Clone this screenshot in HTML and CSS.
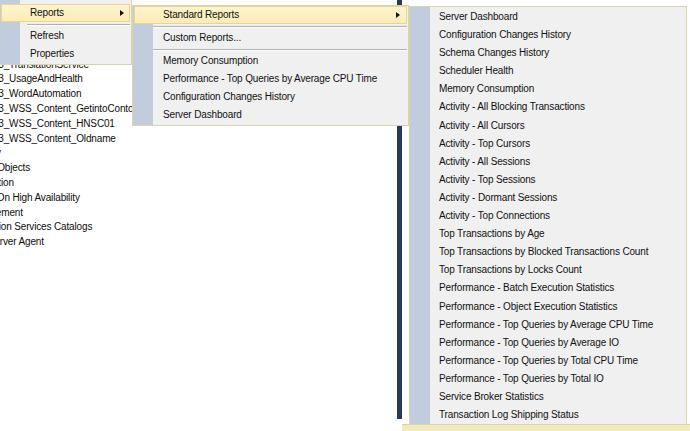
FILE: index.html
```html
<!DOCTYPE html>
<html lang="en">
<head>
<meta charset="utf-8">
<title>Reports menu</title>
<link rel="stylesheet" href="styles.css">
</head>
<body>
<div class="desktop">
  <div class="explorer">
    <ul class="tree">
      <li class="db">SP2013_TranslationService</li>
      <li class="db">SP2013_UsageAndHealth</li>
      <li class="db">SP2013_WordAutomation</li>
      <li class="db">SP2013_WSS_Content_GetintoContoso</li>
      <li class="db">SP2013_WSS_Content_HNSC01</li>
      <li class="db">SP2013_WSS_Content_Oldname</li>
      <li class="top">Security</li>
      <li class="top">Server Objects</li>
      <li class="top">Replication</li>
      <li class="top">AlwaysOn High Availability</li>
      <li class="top">Management</li>
      <li class="top">Integration Services Catalogs</li>
      <li class="top">SQL Server Agent</li>
    </ul>
  </div>
  <div class="splitter"></div>
  <div class="docarea">
    <div class="editor"></div>
    <div class="status"><span class="ok-icon"></span><span>Query executed successfully.</span></div>
  </div>

  <div class="menu menu-context">
    <div class="item hot"><span class="label">Reports</span><span class="arrow"></span></div>
    <div class="sep"></div>
    <div class="item"><span class="label">Refresh</span></div>
    <div class="item"><span class="label">Properties</span></div>
  </div>

  <div class="menu menu-reports">
    <div class="item hot"><span class="label">Standard Reports</span><span class="arrow"></span></div>
    <div class="sep"></div>
    <div class="item"><span class="label">Custom Reports...</span></div>
    <div class="sep"></div>
    <div class="item"><span class="label">Memory Consumption</span></div>
    <div class="item"><span class="label">Performance - Top Queries by Average CPU Time</span></div>
    <div class="item"><span class="label">Configuration Changes History</span></div>
    <div class="item"><span class="label">Server Dashboard</span></div>
  </div>

  <div class="menu menu-standard">
    <div class="item"><span class="label">Server Dashboard</span></div>
    <div class="item"><span class="label">Configuration Changes History</span></div>
    <div class="item"><span class="label">Schema Changes History</span></div>
    <div class="item"><span class="label">Scheduler Health</span></div>
    <div class="item"><span class="label">Memory Consumption</span></div>
    <div class="item"><span class="label">Activity - All Blocking Transactions</span></div>
    <div class="item"><span class="label">Activity - All Cursors</span></div>
    <div class="item"><span class="label">Activity - Top Cursors</span></div>
    <div class="item"><span class="label">Activity - All Sessions</span></div>
    <div class="item"><span class="label">Activity - Top Sessions</span></div>
    <div class="item"><span class="label">Activity - Dormant Sessions</span></div>
    <div class="item"><span class="label">Activity - Top Connections</span></div>
    <div class="item"><span class="label">Top Transactions by Age</span></div>
    <div class="item"><span class="label">Top Transactions by Blocked Transactions Count</span></div>
    <div class="item"><span class="label">Top Transactions by Locks Count</span></div>
    <div class="item"><span class="label">Performance - Batch Execution Statistics</span></div>
    <div class="item"><span class="label">Performance - Object Execution Statistics</span></div>
    <div class="item"><span class="label">Performance - Top Queries by Average CPU Time</span></div>
    <div class="item"><span class="label">Performance - Top Queries by Average IO</span></div>
    <div class="item"><span class="label">Performance - Top Queries by Total CPU Time</span></div>
    <div class="item"><span class="label">Performance - Top Queries by Total IO</span></div>
    <div class="item"><span class="label">Service Broker Statistics</span></div>
    <div class="item"><span class="label">Transaction Log Shipping Status</span></div>
  </div>
</div>
</body>
</html>
```

FILE: styles.css
```css
html, body {
  margin: 0;
  padding: 0;
  background: #ffffff;
}

body {
  font-family: "Liberation Sans", Arial, sans-serif;
  font-size: 10px;
  letter-spacing: -0.15px;
  color: #111111;
}

.desktop {
  position: relative;
  display: flex;
  width: 690px;
  height: 431px;
  overflow: hidden;
  background: #ffffff;
}

/* Object explorer tree (left, cropped by the window edge) */
.explorer {
  flex: none;
  width: 397px;
  overflow: hidden;
}

.tree {
  list-style: none;
  margin: 0 0 0 -34px;
  padding: 57.6px 0 0;
}

.tree li {
  line-height: 14.8px;
  height: 14.8px;
  white-space: nowrap;
  color: #0d0d0d;
}

.tree .db {
  padding-left: 3px;
}

.splitter {
  flex: none;
  width: 5px;
  height: 419px;
  background: #293a57;
}

.docarea {
  flex: 1;
  display: flex;
  flex-direction: column;
  overflow: hidden;
}

.editor {
  flex: none;
  height: 424px;
  background: #ffffff;
}

.status {
  flex: none;
  display: flex;
  align-items: center;
  gap: 4px;
  height: 20px;
  padding-left: 5px;
  background: #f1ebbb;
  border-top: 1px solid #dcd49e;
  color: #333333;
}

.ok-icon {
  width: 7px;
  height: 7px;
  background: #5ca62f;
  border-radius: 1px;
}

/* Context menus */
.menu {
  position: absolute;
  box-sizing: content-box;
  background: linear-gradient(to right, #c1ccdc 0, #c1ccdc 20px, #f0f0f0 20px);
  border: 1px solid #d8d5ab;
  color: #111111;
}

.menu-context {
  left: -1px;
  top: -1px;
  width: 131px;
  padding: 4px 0 1px;
}

.menu-reports {
  left: 132px;
  top: 5px;
  width: 275px;
  padding: 0 0 1px;
}

.menu-standard {
  left: 409px;
  top: 6px;
  width: 276px;
  padding: 1px 0 0;
}

.item {
  display: flex;
  align-items: center;
  height: 16px;
  line-height: 16px;
  margin: 0 1px;
  padding-left: 28px;
  border: 1px solid transparent;
  white-space: nowrap;
}

.menu-standard .item {
  height: 16.1px;
  line-height: 16.1px;
  padding-left: 27px;
}

.item.hot {
  background: linear-gradient(#fdf4cf, #fbecb6);
  border-color: #e9d592;
}

.item .label {
  flex: 1;
}

.arrow {
  width: 0;
  height: 0;
  margin-right: 6px;
  border-left: 4px solid #111111;
  border-top: 3.5px solid transparent;
  border-bottom: 3.5px solid transparent;
}

.menu-context .arrow {
  margin-right: 5px;
}

.sep {
  height: 1px;
  margin: 2px 1px 1px 20px;
  background: #b0b0b0;
  border-bottom: 1px solid #ffffff;
}

.menu-context .sep {
  margin-left: 27px;
}
```
